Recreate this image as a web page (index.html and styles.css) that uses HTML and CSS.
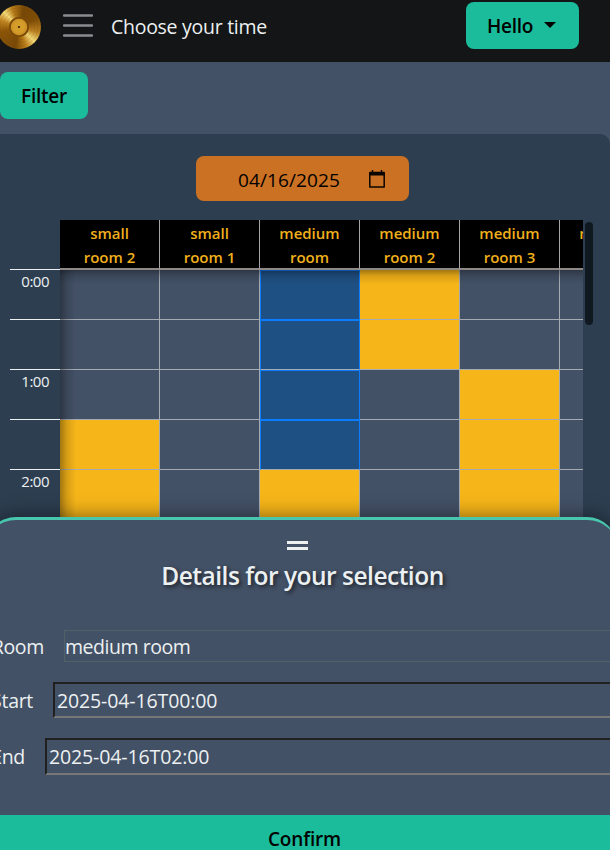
FILE: index.html
```html
<!DOCTYPE html>
<html lang="en">
<head>
<meta charset="utf-8">
<title>Choose your time</title>
<link rel="stylesheet" href="styles.css">
</head>
<body>
<header class="topbar">
  <svg class="logo" width="44" height="44" viewBox="0 0 44 44" aria-hidden="true">
    <defs>
      <clipPath id="disc"><circle cx="22" cy="22" r="22"/></clipPath>
    </defs>
    <foreignObject width="44" height="44" clip-path="url(#disc)"><div class="vinyl"></div></foreignObject>
    <g fill="none" stroke="#6b3f05" stroke-opacity=".15"><circle cx="22" cy="22" r="19"/><circle cx="22" cy="22" r="16"/><circle cx="22" cy="22" r="13"/></g>
    <circle cx="22" cy="22" r="9.2" fill="#cf9526" stroke="#7c4b08" stroke-width="2"/>
    <circle cx="22" cy="22" r="6" fill="#d59d2a"/>
    <circle cx="22" cy="22" r="1.1" fill="#3a2504"/>
  </svg>
  <svg class="burger" width="30" height="24" viewBox="0 0 30 24" aria-hidden="true"><path d="M1 1.5H29M1 11.5H29M1 21.5H29" stroke="#8c8c90" stroke-width="2.4" stroke-linecap="round"/></svg>
  <span class="title">Choose your time</span>
  <button class="btn hello"><span>Hello</span><i class="caret"></i></button>
</header>
<div class="toolbar"><button class="btn filter"><span>Filter</span></button></div>
<main class="panel">
  <div class="date"><span>04/16/2025</span>
    <svg width="16" height="18" viewBox="0 0 16 18" aria-hidden="true"><path d="M.8 2.4h14.4v14.6H.8z" fill="none" stroke="#0b0500" stroke-width="1.5" stroke-linejoin="round"/><path d="M.8 2h14.4v3.4H.8zM2.8 0h1.4v3H2.8zM11.8 0h1.4v3h-1.4z" fill="#0b0500"/></svg>
  </div>
  <div class="schedule">
    <div class="times">
      <div>0:00</div><div></div><div>1:00</div><div></div><div>2:00</div><div></div>
    </div>
    <div class="rooms">
      <div class="room"><h3>small<br>room 2</h3><i></i><i></i><i></i><i class="busy"></i><i class="busy"></i></div>
      <div class="room"><h3>small<br>room 1</h3><i></i><i></i><i></i><i></i><i></i></div>
      <div class="room"><h3>medium<br>room</h3><i class="pick"></i><i class="pick hour"></i><i class="pick"></i><i class="pick hour"></i><i class="busy"></i></div>
      <div class="room"><h3>medium<br>room 2</h3><i class="busy"></i><i class="busy"></i><i></i><i></i><i></i></div>
      <div class="room"><h3>medium<br>room 3</h3><i></i><i></i><i class="busy"></i><i class="busy"></i><i class="busy"></i></div>
      <div class="room"><h3>medium</h3><i></i><i></i><i></i><i></i><i></i></div>
    </div>
    <div class="scroll"></div>
  </div>
</main>
<section class="sheet">
  <div class="grip"></div>
  <h2><span>Details for your selection</span></h2>
  <div class="row room-row"><label>Room</label><div class="field plain"><span>medium room</span></div></div>
  <div class="row start-row"><label>Start</label><div class="field"><span>2025-04-16T00:00</span></div></div>
  <div class="row end-row"><label>End</label><div class="field"><span>2025-04-16T02:00</span></div></div>
  <button class="confirm"><span>Confirm</span></button>
</section>
</body>
</html>
```
FILE: styles.css
```css
* { box-sizing: border-box; }
html, body { height: 850px; overflow: hidden; }
body {
  margin: 0;
  position: relative;
  background: #435166;
  color: #ecf0f1;
  font-family: "Open Sans", "Noto Sans", sans-serif;
  font-size: 19.5px;
}
button { font: inherit; border: 0; padding: 0; }
.topbar { display: flex; height: 62px; background: #131516; }
.logo { flex: none; margin: 5px 0 0 -3px; }
.vinyl {
  width: 44px; height: 44px;
  background: conic-gradient(from -45deg, #f3d877, #b67a17 25deg, #774806 60deg, #7f4e07 110deg, #b98020 150deg, #f3d877 178deg, #b97d18 205deg, #794a07 235deg, #8d5608 300deg, #c18520 335deg, #f3d877);
}
.burger { flex: none; margin: 14px 0 0 22px; }
.title { margin-left: 18px; line-height: 53px; letter-spacing: -.28px; white-space: nowrap; }
.btn {
  height: 47px; border-radius: 8px; background: #1bbc9b; color: #000;
  font-size: 19px; font-weight: 600; letter-spacing: -.25px;
}
.hello { display: flex; align-items: center; width: 113px; margin: 2px 31px 0 auto; padding-left: 21px; }
.caret { margin: -2px 0 0 11px; border: 6px solid transparent; border-top-color: #000; border-bottom: 0; }
.toolbar { height: 72px; padding-top: 10px; }
.filter { width: 88px; }
.panel { height: 716px; padding-top: 22px; background: #2d3e50; border-top-right-radius: 10px; }
.date {
  display: flex; align-items: center; width: 213px; height: 45px; margin-left: 196px; padding: 0 24px 0 42px;
  justify-content: space-between; border-radius: 8px; background: #cb7123; color: #000;
  font-size: 19px; font-weight: 500; letter-spacing: .1px;
}
.date span { padding-top: 2px; }
.schedule { display: flex; margin: 19px 0 0 10px; height: 300px; overflow: hidden; }
.times { width: 50px; padding-top: 49px; font-size: 15px; letter-spacing: -.5px; }
.times div { height: 50px; border-top: 1px solid #ecf0f1; padding-right: 11px; text-align: right; line-height: 23px; }
.rooms { position: relative; display: flex; width: 523px; overflow: hidden; }
.rooms::after {
  content: ""; position: absolute; inset: 50px 0 0;
  background: linear-gradient(90deg, rgba(0,0,0,.34), rgba(0,0,0,.13) 7px, transparent 16px), linear-gradient(rgba(0,0,0,.34), rgba(0,0,0,.12) 6px, transparent 14px);
}
.room { flex: none; width: 100px; }
.room h3 {
  height: 50px; margin: 0; padding-top: 1px; background: #000; color: #f0b01c;
  border-right: 1px solid #a5a5a5; border-bottom: 2px solid #8c8986;
  text-align: center; font-size: 15px; line-height: 24px; font-weight: 600; letter-spacing: 0;
}
.room i { display: block; height: 50px; border-right: 1px solid #a6abb2; border-bottom: 1px solid #a6abb2; background: #435166; }
.room .busy { background: #f6b519; }
.room .pick { background: #1f5083; border: 1px solid #0a7cff; }
.room .hour { border-bottom-color: #a6abb2; }
.scroll { width: 8px; height: 103px; margin: 2px 0 0 2px; border-radius: 4px; background: #111920; }
.sheet {
  position: absolute; top: 517px; left: -14px; width: 631px; height: 345px;
  border-top: 3px solid #49c6ae; border-radius: 30px 30px 0 0; background: #435166;
  box-shadow: 0 0 20px rgba(0,0,0,.5);
}
.grip { width: 21px; height: 9px; margin: 21px 0 0 301px; border: solid #ecf0f1; border-width: 3px 0; }
h2 {
  margin: 8px 0 0; padding-left: 2px; text-align: center; font-size: 24.5px; line-height: 36px;
  font-weight: 600; letter-spacing: -.5px; text-shadow: 2px 2px 4px rgba(0,0,0,.65);
}
.row { display: flex; line-height: 33px; white-space: nowrap; }
label { flex: none; letter-spacing: -.3px; text-align: right; }
.field { flex: 1; height: 36px; padding-left: 2px; border: 2px solid; border-color: #20201f #777 #777 #20201f; letter-spacing: -.12px; }
.plain { height: 32px; padding-left: 0; border: 1px solid #526067; line-height: 31px; letter-spacing: -.45px; }
.room-row { margin-top: 36px; }
.room-row label { width: 58px; margin-right: 20px; height: 32px; }
.start-row { margin-top: 20px; }
.start-row label { width: 47px; height: 33px; margin: 2px 20px 0 0; }
.end-row { margin-top: 20px; }
.end-row .field { height: 37px; }
.end-row label { width: 39px; height: 33px; margin: 2px 20px 0 0; }
.confirm { display: block; width: 631px; height: 47px; margin-top: 40px; padding-left: 6px; background: #1bbc9b; color: #000; font-size: 19px; font-weight: 600; letter-spacing: -.15px; }
```
